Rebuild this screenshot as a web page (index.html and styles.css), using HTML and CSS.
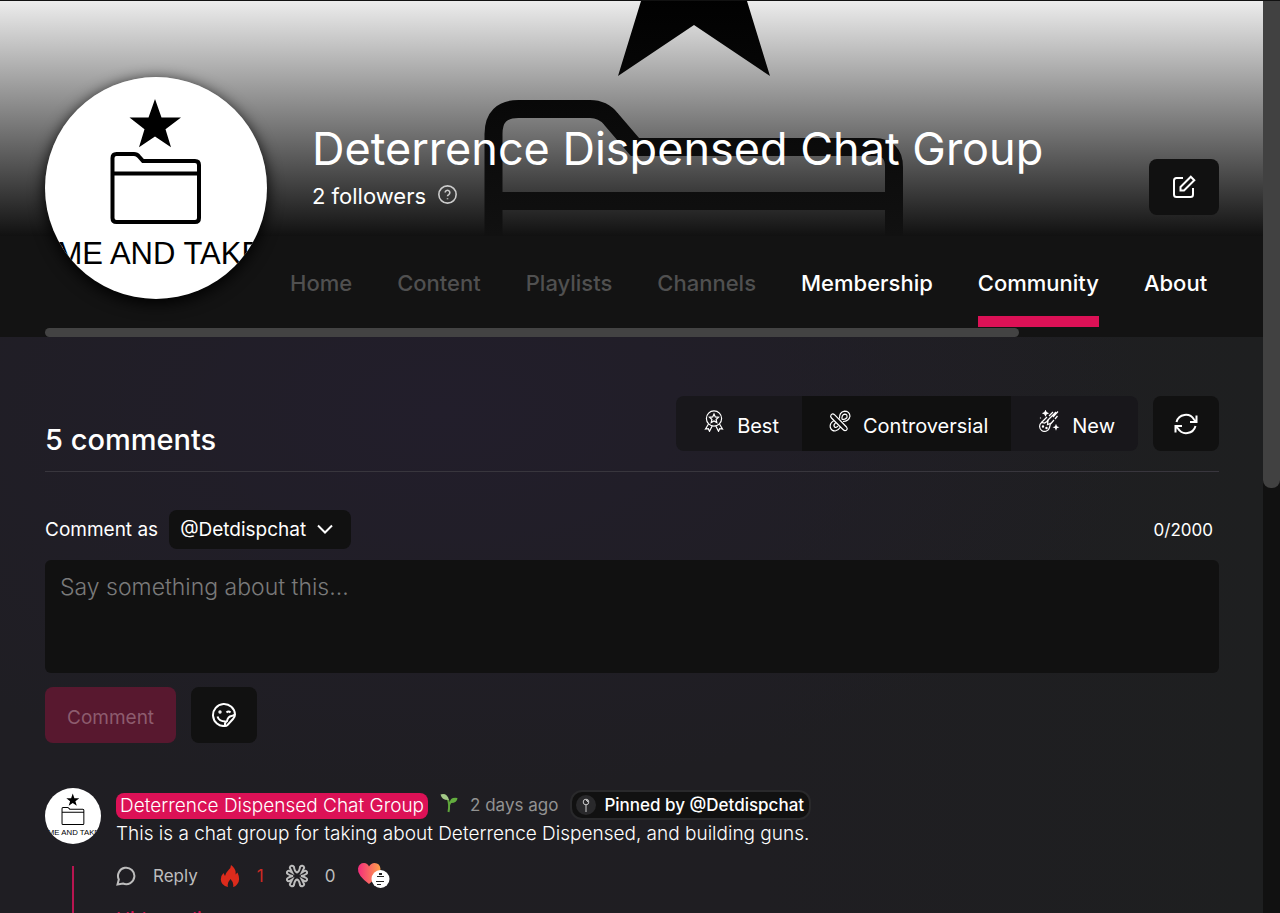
FILE: index.html
```html
<!DOCTYPE html>
<html lang="en">
<head>
<meta charset="utf-8">
<meta name="viewport" content="width=device-width, initial-scale=1">
<title>Deterrence Dispensed Chat Group</title>
<link rel="stylesheet" href="styles.css">
</head>
<body>
<svg class="defs" aria-hidden="true">
  <symbol id="logo" viewBox="0 0 222 222">
    <rect width="222" height="222" fill="#fff"/>
    <path d="M110 22l6.500 18.500H136l-15.500 11.700 5.500 18L110 59.500 94 70.200l5.500-18L84.500 40.500h19z"/>
    <path d="M67.500 81q0-4 4-4H89q3 0 5 2.500l4 4.500h52q4 0 4 4v53q0 4-4 4H71.500q-4 0-4-4zM67.500 96.500h86" fill="none" stroke="#000" stroke-width="4"/>
    <text class="logo-text" x="-35" y="187">COME AND TAKE IT</text>
  </symbol>
</svg>
<div class="page">
  <main class="content">
    <header class="channel">
      <div class="banner">
        <svg class="banner-art" viewBox="0 0 1263 235" preserveAspectRatio="xMidYMin slice" aria-hidden="true">
          <path d="M641 0L618 75l76-51 76 51L747 0z"/>
          <path d="M493.500 240V133q0-25 25-25H590q13 0 21 10l24 28h239q20 0 20 20v74M493.500 200H894" fill="none" stroke="#000" stroke-width="18"/>
        </svg>
        <div class="identity">
          <h1 class="title">Deterrence Dispensed Chat Group</h1>
          <p class="followers">2 followers
            <svg class="help" viewBox="0 0 18 18" aria-hidden="true"><circle cx="9" cy="9" r="8.200"/><path d="M6.800 7.200a2.200 2.200 0 1 1 3.400 1.900q-1.200.7-1.200 1.600M9 12.600v1"/></svg>
          </p>
        </div>
        <button class="button edit" aria-label="Edit channel">
          <svg class="icon-edit" viewBox="0 0 24 24" aria-hidden="true"><path d="M11 3H4.500Q2 3 2 5.500v14Q2 22 4.500 22h14q2.500 0 2.500-2.500V13M8.500 12l10.300-10.300 3.500 3.500L12 15.500H8.500z"/></svg>
        </button>
      </div>
      <svg class="avatar" role="img" aria-label="Channel logo"><use href="#logo"/></svg>
      <nav class="tabs">
        <a class="tab muted" href="#home">Home</a>
        <a class="tab muted" href="#content">Content</a>
        <a class="tab muted" href="#playlists">Playlists</a>
        <a class="tab muted" href="#channels">Channels</a>
        <a class="tab" href="#membership">Membership</a>
        <a class="tab active" href="#community">Community</a>
        <a class="tab" href="#about">About</a>
      </nav>
      <div class="tabs-scroll"><div class="tabs-thumb"></div></div>
    </header>

    <section class="comments">
      <div class="comments-head">
        <h2 class="count">5 comments</h2>
        <div class="tools">
          <div class="sort">
            <button class="sort-item">
              <svg class="sort-icon" viewBox="0 0 22 22" aria-hidden="true"><circle cx="11" cy="8.500" r="7.600"/><path d="M11 4l1.300 2.900 3.200.4-2.400 2.200.7 3.100-2.800-1.600-2.800 1.600.7-3.100-2.400-2.200 3.200-.4zM5.500 14l-3 5 2.800-.3 1.200 2.600 2.800-5.500M16.500 14l3 5-2.800-.3-1.200 2.600-2.800-5.500"/></svg>
              Best
            </button>
            <button class="sort-item selected">
              <svg class="sort-icon pacifier" viewBox="0 0 22 22" aria-hidden="true"><path d="M2 5q1.500-2 3.500-.3L17.500 17q1.500 2-.2 3.200-1.600 1-3.300-.7L2.500 8Q1 6.500 2 5zM10.500 8.500q-.5-6 5-7.300 5 0 5.500 5-1 5.300-7 5.300M13 9.500q-.5-4.500 2.500-5.300 3 0 2.500 3Q17 9.500 13 9.500M4.500 11Q.8 13 1.200 17q1 4 5 4 3.300-.5 4.800-3.500M6.500 13q-2.500 2-1 4 2 1.300 3.500-1"/></svg>
              Controversial
            </button>
            <button class="sort-item">
              <svg class="sort-icon meteor" viewBox="0 0 22 22" aria-hidden="true"><path d="M3.500 12.500L9 7M11 6l4-4M9 11l9-9M12.500 14l3.500-4M17 9l2.500-3M15 7l5-5.500"/><path d="M3.500 12.500a5 5 0 1 0 8 5l1-4-3 1 .5-3.500-3.500 2z"/><circle cx="5" cy="16.500" r=".6"/><circle cx="8.500" cy="18" r=".6"/><path d="M7.500 1l.7 1.500 1.500.7-1.500.7-.7 1.500-.7-1.500-1.500-.7 1.500-.7zM18 15.500l.5 1.300 1.300.5-1.300.5-.5 1.300-.5-1.300-1.300-.5 1.300-.5zM2.500 7.500v1" fill="#fff"/></svg>
              New
            </button>
          </div>
          <button class="button" aria-label="Refresh comments">
            <svg class="icon" viewBox="0 0 24 24" aria-hidden="true"><path d="M2.500 10A9.600 9.600 0 0 1 20 7.500l2 2.500M22.500 3.500V10H16M21.500 14A9.600 9.600 0 0 1 4 16.500L2 14M1.500 20.500V14H8"/></svg>
          </button>
        </div>
      </div>

      <form class="composer">
        <div class="composer-head">
          <label for="author">Comment as</label>
          <div class="author">
            <select class="author-select" id="author"><option>@Detdispchat</option></select>
            <svg class="chevron" viewBox="0 0 16 10" aria-hidden="true"><path d="M1 1.500l7 7 7-7"/></svg>
          </div>
          <span class="limit">0/2000</span>
        </div>
        <textarea class="message" rows="3" aria-label="Comment text" placeholder="Say something about this..."></textarea>
        <div class="composer-actions">
          <button class="submit" type="button" disabled>Comment</button>
          <button class="button" type="button" aria-label="Stickers">
            <svg class="icon" viewBox="0 0 24 24" aria-hidden="true"><path d="M13 23A11 11 0 1 1 23 11.500q0 2.500-2 4.500l-5.500 6q-1 1-2.500 1zM13 23q-.5-4 2-5 1-4.500 4.500-5 2.500-.3 3.500-2M5.500 13.500q1.500 5 8 5M14.500 9.500q2-2 4 0"/><circle cx="8" cy="9" r=".7"/></svg>
          </button>
        </div>
      </form>

      <article class="comment">
        <div class="comment-side">
          <svg class="comment-avatar" role="img" aria-label="Author logo"><use href="#logo"/></svg>
          <div class="thread"></div>
        </div>
        <div class="comment-body">
          <div class="meta">
            <a class="author-name" href="#author-page">Deterrence Dispensed Chat Group</a>
            <svg class="sprout" viewBox="0 0 18 20" aria-hidden="true"><path d="M8.500 19Q10 12 8 6.500M9 12q2-4.500 7-6" fill="none" stroke="#5fa53c" stroke-width="2"/><path d="M.5 1.500Q7-.5 9 7 2 7.500.5 1.500z" fill="#a3c987"/><path d="M10 10Q9.500 4 17.500 5q-.5 5.500-7.500 5z" fill="#63ad3f"/></svg>
            <time class="age">2 days ago</time>
            <span class="pinned">
              <svg class="pin" viewBox="0 0 20 20" aria-hidden="true"><circle cx="10" cy="10" r="10" fill="#29292b" stroke="none"/><circle cx="10" cy="7" r="2.800"/><path d="M10 10v7M10 5.500h1.500v1.500"/></svg>
              Pinned by @Detdispchat
            </span>
          </div>
          <p class="text">This is a chat group for taking about Deterrence Dispensed, and building guns.</p>
          <div class="actions">
            <button class="action reply">
              <svg class="bubble" viewBox="0 0 20 20" aria-hidden="true"><path d="M1.500 18.500l1.300-5A8.200 8.200 0 1 1 7 17.500z"/></svg>
              Reply
            </button>
            <button class="action hot" aria-label="1 fire reaction">
              <svg class="flame" viewBox="0 0 20 24" aria-hidden="true"><path d="M11 1q5.500 4 4.500 9.500l2-2q3.500 8-.5 12-1.500 2-4 2.500 1.300-4-2.500-8-3.800 4-2.500 8Q1 21.500 .8 15.500 .8 11.500 3.500 9L5 12Q6 8.500 8.500 6 11 4 11 1z"/></svg>
              1
            </button>
            <button class="action cold" aria-label="0 ice reactions">
              <svg class="splat" viewBox="0 0 22 24" aria-hidden="true"><path d="M11 8.500Q13.500 7.500 14 3a2.200 2.200 0 0 1 4.200.8L15.800 8.600 18.500 7a1.700 1.700 0 0 1 1.700 3Q18 11.500 15 12q3 .5 5.200 2a1.700 1.700 0 0 1-1.700 3l-2.700-1.600 2.400 4.800A2.200 2.200 0 0 1 14 21Q13.500 16.500 11 15.500 8.500 16.500 8 21a2.200 2.200 0 0 1-4.200-.8l2.400-4.800L3.500 17a1.700 1.700 0 0 1-1.700-3Q4 12.500 7 12 4 11.500 1.800 10a1.700 1.700 0 0 1 1.700-3l2.700 1.600L3.800 3.800A2.200 2.200 0 0 1 8 3Q8.500 7.500 11 8.500z"/></svg>
              0
            </button>
            <svg class="heart" viewBox="0 0 34 28" role="img" aria-label="Liked by the channel">
              <defs><linearGradient id="love"><stop stop-color="#f32b7c"/><stop offset="1" stop-color="#ffa24a"/></linearGradient></defs>
              <path d="M12 22Q0 13 1 6.500 2 1 7 1q3.500 0 5 3.500Q14 1 17.500 1 23 1 23.500 7 23.500 13 12 22z" fill="url(#love)"/>
              <circle cx="23.500" cy="17" r="9" fill="#fff"/>
              <path d="M22 11h3v2h-3zM20 14h7v1h-7zM19 19h8v1h-8zM20 22h4v1h-4z"/>
            </svg>
          </div>
          <a class="replies" href="#replies">Hide replies</a>
        </div>
      </article>
    </section>
  </main>
  <div class="scrollbar" aria-hidden="true"><div class="scroll-thumb"></div></div>
</div>
</body>
</html>
```
FILE: styles.css
```css
* {
  box-sizing: border-box;
}

body {
  margin: 0;
  background: #111;
  color: #fff;
  font-family: Inter, "Liberation Sans", sans-serif;
  font-size: 19px;
}

h1, h2, p {
  margin: 0;
  font-weight: 400;
}

a {
  color: inherit;
  text-decoration: none;
}

button, select, textarea {
  border: 0;
  color: inherit;
  font: inherit;
}

svg {
  flex: none;
  fill: none;
}

.defs {
  position: absolute;
  width: 0;
  height: 0;
}

.logo-text {
  font-family: "Liberation Sans", sans-serif;
  font-size: 31px;
}

#logo path, #logo text, .banner-art path:first-child {
  fill: #000;
}

#logo path + path {
  fill: none;
}

.page {
  display: flex;
  height: 100vh;
  overflow: hidden;
  border-top: 1px solid #111;
}

.content {
  flex: 1;
  min-width: 0;
  overflow: hidden;
  background:
    radial-gradient(ellipse 700px 380px at 35% 45%, #221e2b, transparent),
    linear-gradient(90deg, #1f1e23, #1f1e22 60%, #1e1f20);
}

.scrollbar {
  width: 17px;
  background: #111;
}

.scroll-thumb {
  height: 487px;
  border-radius: 0 0 8px 8px;
  background: #414141;
}

/* Channel header */
.channel {
  position: relative;
  background: #131313;
}

.banner {
  position: relative;
  display: flex;
  align-items: flex-end;
  justify-content: space-between;
  padding: 118px 44px 21px 312px;
  background: #fff;
}

.banner::after {
  content: "";
  position: absolute;
  inset: 0;
  background: linear-gradient(rgba(17, 17, 17, 0.08), #111);
}

.banner-art {
  position: absolute;
  inset: 0;
  width: 100%;
  height: 100%;
}

.identity, .edit {
  position: relative;
  z-index: 1;
}

.identity {
  padding-bottom: 2px;
}

.title {
  font-size: 45px;
  line-height: 60px;
}

.followers {
  display: flex;
  align-items: center;
  gap: 12px;
  font-size: 22px;
  line-height: 34px;
}

.help {
  width: 19px;
  height: 19px;
  margin-bottom: 4px;
  stroke: #ccc;
  stroke-width: 1.5;
}

.avatar {
  position: absolute;
  z-index: 2;
  top: 76px;
  left: 45px;
  width: 222px;
  height: 222px;
  border-radius: 50%;
  box-shadow: 0 4px 16px #000;
}

.tabs {
  display: flex;
  gap: 45px;
  padding-left: 290px;
  font-size: 22px;
  font-weight: 500;
  line-height: 30px;
}

.tab {
  padding: 32px 0 18px;
  border-bottom: 11px solid transparent;
}

.muted {
  color: #505050;
}

.active {
  border-color: #dc1156;
}

.tabs-scroll {
  padding: 1px 45px 0;
}

.tabs-thumb {
  width: 83%;
  height: 9px;
  border-radius: 5px;
  background: #434343;
}

/* Comment list heading */
.comments {
  padding: 59px 44px 0 45px;
}

.comments-head {
  display: flex;
  align-items: flex-end;
  justify-content: space-between;
  padding-bottom: 12px;
  border-bottom: 1px solid #38363d;
}

.count {
  font-size: 29px;
  font-weight: 500;
  line-height: 38px;
}

.tools {
  display: flex;
  gap: 15px;
  margin-bottom: 8px;
}

.sort {
  display: flex;
  overflow: hidden;
  border-radius: 8px;
  background: #18171b;
}

.sort-item {
  display: flex;
  align-items: center;
  gap: 12px;
  padding: 4px 23px 0 27px;
  background: none;
  font-size: 20px;
}

.selected {
  background: #101010;
}

.sort-icon {
  width: 22px;
  height: 22px;
  margin-bottom: 10px;
  stroke: #fff;
  stroke-width: 1.2;
}

.button {
  display: flex;
  align-items: center;
  justify-content: center;
  padding: 16px 21px;
  border-radius: 8px;
  background: #111;
}

.sort + .button {
  padding-bottom: 15px;
}

.icon, .icon-edit {
  width: 24px;
  height: 24px;
  stroke: #fff;
  stroke-width: 2;
}

.edit {
  padding: 16px 23px;
}

/* Comment form */
.composer {
  padding-top: 38px;
}

.composer-head {
  display: flex;
  align-items: center;
  gap: 11px;
  margin-bottom: 11px;
}

.author {
  position: relative;
}

.author-select {
  appearance: none;
  padding: 0 44px 0 11px;
  border-radius: 8px;
  background: #111;
  line-height: 39px;
}

.chevron {
  position: absolute;
  top: 14px;
  right: 18px;
  width: 16px;
  height: 10px;
  pointer-events: none;
  stroke: #fff;
  stroke-width: 2;
}

.limit {
  margin-left: auto;
  padding-right: 6px;
  font-size: 17px;
}

.message {
  display: block;
  width: 100%;
  padding: 12px 15px 11px;
  border-radius: 6px;
  background: #111;
  font-size: 23px;
  font-weight: 300;
  line-height: 30px;
  resize: none;
}

.message::placeholder {
  color: #7a7a7a;
}

.composer-actions {
  display: flex;
  gap: 15px;
  margin-top: 14px;
}

.submit {
  padding: 4px 22px 0;
  border-radius: 8px;
  background: #58182f;
  color: #8d5c6e;
}

/* Comment */
.comment {
  display: flex;
  gap: 15px;
  padding-top: 45px;
}

.comment-side {
  display: flex;
  flex-direction: column;
  align-items: center;
  gap: 22px;
}

.comment-avatar {
  width: 56px;
  height: 56px;
  border-radius: 50%;
}

.thread {
  flex: 1;
  width: 2px;
  background: #b81550;
}

.meta {
  display: flex;
  align-items: center;
  gap: 12px;
  padding-top: 2px;
}

.author-name {
  padding: 0 4px;
  margin-top: 2px;
  border-radius: 8px;
  background: #dc1156;
  font-weight: 300;
  line-height: 26px;
}

.sprout {
  width: 18px;
  height: 20px;
  margin-bottom: 4px;
}

.age {
  color: #929292;
  font-size: 17px;
}

.pinned {
  display: flex;
  align-items: center;
  gap: 8px;
  padding: 0 5px 0 4px;
  border: 2px solid #29292b;
  border-radius: 12px;
  background: #111;
  font-size: 17px;
  font-weight: 500;
  line-height: 26px;
}

.pin {
  width: 20px;
  height: 20px;
  stroke: #ccc;
}

.text {
  font-weight: 300;
  line-height: 28px;
}

.actions {
  display: flex;
  align-items: center;
  gap: 22px;
  padding-top: 14px;
}

.action {
  display: flex;
  align-items: center;
  gap: 17px;
  padding: 0;
  background: none;
  color: #bdbdbd;
  font-size: 17px;
  line-height: 28px;
}

.bubble {
  width: 20px;
  height: 20px;
  stroke: #bdbdbd;
  stroke-width: 2;
}

.hot {
  color: #cf2a24;
}

.flame {
  width: 20px;
  height: 24px;
  fill: #dc2b1c;
}

.splat {
  width: 22px;
  height: 24px;
  stroke: #bdbdbd;
  stroke-width: 2;
}

.heart {
  width: 34px;
  height: 28px;
}

.heart path:last-child {
  fill: #222;
}

.replies {
  display: block;
  padding-top: 16px;
  color: #dc1156;
  line-height: 28px;
}
```
